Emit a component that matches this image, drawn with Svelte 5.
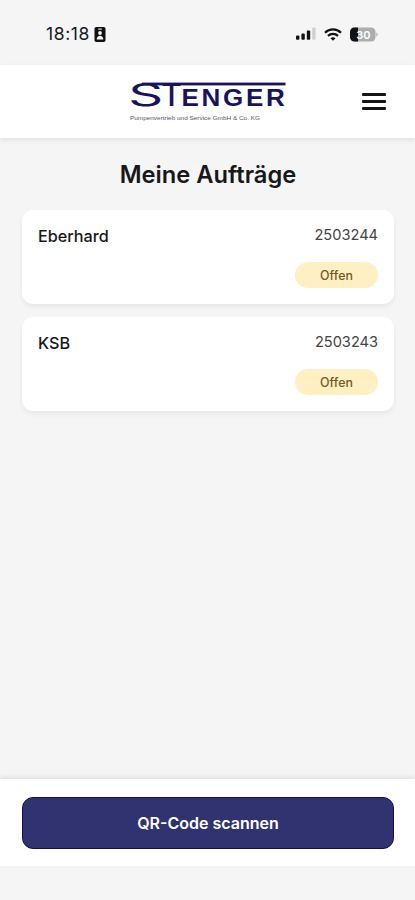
<script lang="ts">
  interface Order {
    id: string;
    customer: string;
    status: string;
  }

  const orders: Order[] = [
    { id: '2503244', customer: 'Eberhard', status: 'Offen' },
    { id: '2503243', customer: 'KSB', status: 'Offen' }
  ];
</script>

<div class="app">
  <div class="status-bar">
    <div class="clock">
      <span>18:18</span>
      <svg width="12" height="15" viewBox="0 0 12 15" aria-hidden="true">
        <rect x="0.5" y="0" width="11" height="15" rx="1.8" fill="#111" />
        <rect x="4" y="1.4" width="4" height="1.3" rx="0.6" fill="#ddd" />
        <circle cx="6" cy="6" r="1.9" fill="#f5f5f5" />
        <path d="M2.7 12.6c0-5 6.6-5 6.6 0z" fill="#f5f5f5" />
      </svg>
    </div>
    <div class="indicators">
      <svg width="20" height="14" viewBox="0 0 20 14" aria-hidden="true">
        <rect x="0" y="8.6" width="3.4" height="4.2" rx="1" fill="#111" />
        <rect x="5.4" y="6.6" width="3.4" height="6.2" rx="1" fill="#111" />
        <rect x="10.8" y="3.5" width="3.4" height="9.3" rx="1" fill="#111" />
        <rect x="16.2" y="0.6" width="3.4" height="12.2" rx="1" fill="#d0d0d0" />
      </svg>
      <svg width="18" height="13" viewBox="0 0 18 13" fill="none" stroke="#111" aria-hidden="true">
        <path d="M1 4.7C5.5.3 12.5.3 17 4.7" stroke-width="2.3" />
        <path d="M4 7.9c2.9-2.8 7.1-2.8 10 0" stroke-width="2.2" />
        <path d="M6.5 10.3c1.5-1.3 3.5-1.3 5 0L9 12.8z" fill="#111" stroke="none" />
      </svg>
      <svg width="28" height="15" viewBox="0 0 28 15" aria-hidden="true">
        <rect x="0" y="0.5" width="25.5" height="14" rx="4.5" fill="#adadad" />
        <path d="M8 .5H4.5A4.5 4.5 0 0 0 0 5v5a4.5 4.5 0 0 0 4.5 4.5H8z" fill="#111" />
        <path d="M26.3 5.2c2 .8 2 3.8 0 4.6z" fill="#b8b8b8" />
        <text class="battery" x="13.5" y="11.6" text-anchor="middle">30</text>
      </svg>
    </div>
  </div>

  <header class="header">
    <svg class="logo" width="158" height="58" viewBox="0 -8 158 58" role="img" aria-label="Stenger">
      <rect x="13" y="1.6" width="143.5" height="2.8" />
      <text class="initial" x="-0.8" y="24.6" textLength="35" lengthAdjust="spacingAndGlyphs">S</text>
      <text class="initial stem" x="32.2" y="24.9">T</text>
      <text class="name" x="52.5" y="25" textLength="106" lengthAdjust="spacingAndGlyphs">ENGER</text>
      <text class="claim" x="1" y="39.3" textLength="130" lengthAdjust="spacingAndGlyphs">Pumpenvertrieb und Service GmbH &amp; Co. KG</text>
    </svg>
    <button class="menu" aria-label="Menü">
      <span></span>
      <span></span>
      <span></span>
    </button>
  </header>

  <main class="content">
    <h1>Meine Aufträge</h1>
    <div class="orders">
      {#each orders as order (order.id)}
        <article class="card">
          <span class="customer">{order.customer}</span>
          <div class="details">
            <span class="number">{order.id}</span>
            <span class="badge">{order.status}</span>
          </div>
        </article>
      {/each}
    </div>
  </main>

  <footer class="footer">
    <button class="scan">QR-Code scannen</button>
  </footer>
</div>

<style>
  :global(body) {
    background: #f5f5f5;
  }

  .app {
    box-sizing: border-box;
    width: 100%;
    height: 900px;
    padding-bottom: 34.5px;
    display: flex;
    flex-direction: column;
    overflow: hidden;
    background: #f5f5f5;
    color: #18181a;
    font-family: Inter, 'Liberation Sans', sans-serif;
  }

  .status-bar {
    box-sizing: border-box;
    height: 65px;
    padding: 3px 37px 0 46px;
    display: flex;
    align-items: center;
    justify-content: space-between;
  }

  .clock {
    display: flex;
    align-items: center;
    gap: 4px;
    font-size: 17.5px;
    line-height: 20px;
    letter-spacing: 0.6px;
  }

  .indicators {
    display: flex;
    align-items: center;
    gap: 8px;
  }

  .battery {
    fill: #fff;
    font-size: 11px;
    font-weight: 600;
  }

  .header {
    box-sizing: border-box;
    height: 73px;
    padding: 0 28px 0 129px;
    display: flex;
    align-items: center;
    justify-content: space-between;
    background: #fff;
    box-shadow: 0 2px 5px rgba(0, 0, 0, 0.09);
  }

  .logo {
    fill: #17135f;
    font-family: 'Liberation Sans', Arial, sans-serif;
  }

  .initial {
    font-family: Inter, sans-serif;
    font-size: 30.5px;
    font-weight: 400;
  }

  .stem {
    font-size: 31.5px;
    font-weight: 500;
  }

  .name {
    font-size: 23px;
    font-weight: 700;
    letter-spacing: 2.4px;
  }

  .claim {
    font-size: 6px;
    fill: #55555f;
  }

  .menu {
    width: 26px;
    padding: 0;
    border: none;
    background: none;
    display: flex;
    flex-direction: column;
    align-items: center;
    gap: 4.7px;
    cursor: pointer;
  }

  .menu span {
    width: 24px;
    height: 2.6px;
    border-radius: 1px;
    background: #151515;
  }

  .content {
    flex: 1;
    padding: 22px 21px 0 22px;
  }

  h1 {
    margin: 0 0 19.5px;
    font-size: 23.7px;
    line-height: 30px;
    font-weight: 600;
    text-align: center;
  }

  .orders {
    display: flex;
    flex-direction: column;
    gap: 13px;
  }

  .card {
    box-sizing: border-box;
    height: 94px;
    padding: 15px 16px 16px;
    display: flex;
    justify-content: space-between;
    border-radius: 11px;
    background: #fff;
    box-shadow: 0 3px 5px rgba(0, 0, 0, 0.06);
  }

  .customer {
    font-size: 16.2px;
    line-height: 22px;
    font-weight: 500;
  }

  .details {
    display: flex;
    flex-direction: column;
    align-items: flex-end;
    justify-content: space-between;
  }

  .number {
    color: #444;
    font-size: 14.6px;
    line-height: 21px;
  }

  .badge {
    width: 83px;
    height: 26px;
    border-radius: 13px;
    background: #fff0c4;
    color: #735b1b;
    font-size: 12.4px;
    line-height: 27px;
    font-weight: 500;
    text-align: center;
  }

  .footer {
    box-sizing: border-box;
    height: 86.5px;
    padding: 17.5px 21px 17px 22px;
    background: #fff;
    box-shadow: 0 -2px 5px rgba(0, 0, 0, 0.09);
  }

  .scan {
    width: 100%;
    height: 52px;
    padding: 0;
    border: 1px solid #130b59;
    border-radius: 11px;
    background: #30336f;
    color: #fff;
    font-family: inherit;
    font-size: 16px;
    font-weight: 600;
    cursor: pointer;
  }
</style>
